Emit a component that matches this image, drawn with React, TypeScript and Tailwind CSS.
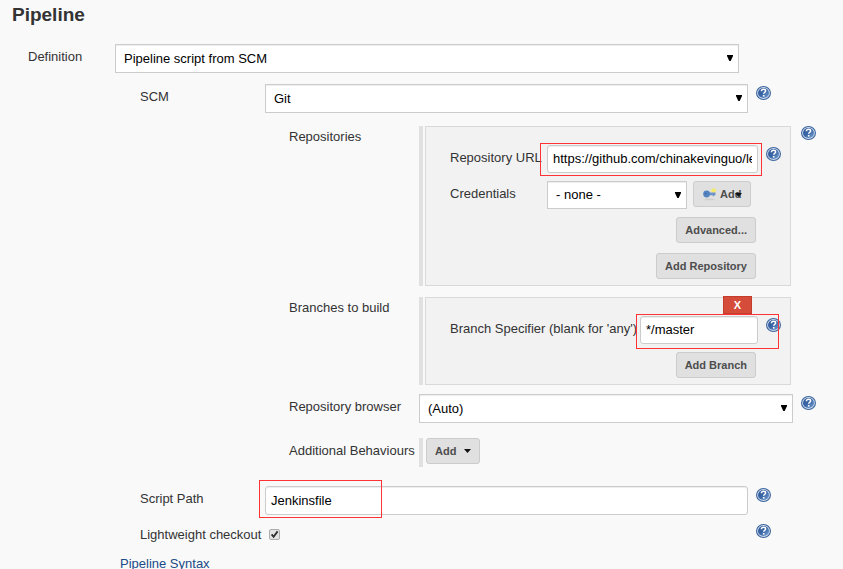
import type { ReactNode, SelectHTMLAttributes } from "react";

const field =
  "w-full border border-[#ccc] bg-white text-[13px] text-black outline-none shadow-[inset_0_1px_1px_rgba(0,0,0,0.075)]";
const button =
  "rounded-[3px] border border-[#ccc] bg-[#e0e0e0] text-[11px] font-bold leading-4 text-[#4d4d4d] px-2 h-[26px] whitespace-nowrap";

function Help({ topic }: { topic: string }) {
  return (
    <a href="#help" aria-label={`Help for feature: ${topic}`} className="mt-[2px] block h-[14px] w-[15px] shrink-0">
      <svg viewBox="0 0 15 14" className="block h-[14px] w-[15px]">
        <defs>
          <linearGradient id="disc" x1="0" y1="0" x2="1" y2="1">
            <stop offset="0" stopColor="#2a5392" />
            <stop offset="0.5" stopColor="#3c68a8" />
            <stop offset="1" stopColor="#7ba3d4" />
          </linearGradient>
        </defs>
        <ellipse cx="7.5" cy="7" rx="7.5" ry="7" fill="#3a649f" />
        <ellipse cx="7.5" cy="7" rx="6.4" ry="6" fill="#cfdcee" />
        <ellipse cx="7.5" cy="7" rx="5.5" ry="5.1" fill="url(#disc)" />
        <path
          d="M5.4 5.2c0-1.3.9-1.9 2.1-1.9s2.1.6 2.1 1.6c0 1.3-1.9 1.4-1.9 2.9"
          fill="none"
          stroke="#fff"
          strokeWidth="1.5"
        />
        <rect x="6.9" y="9" width="1.6" height="1.6" fill="#fff" />
      </svg>
    </a>
  );
}

function Select({ className = "h-[29px]", ...props }: SelectHTMLAttributes<HTMLSelectElement>) {
  return (
    <div className="relative min-w-0 flex-1">
      <select {...props} className={`${field} block appearance-none pr-5 pl-2 ${className}`} />
      <svg viewBox="0 0 6 6" className="pointer-events-none absolute top-[11px] right-[6px] h-[6px] w-[6px]">
        <path d="M0 0h6v1L3.7 6H2.3L0 1z" fill="#000" />
      </svg>
    </div>
  );
}

function Caret() {
  return (
    <svg viewBox="0 0 7 4" className="h-1 w-[7px] shrink-0">
      <path d="M0 0h7L3.5 4z" fill="#111" />
    </svg>
  );
}

function KeyIcon() {
  return (
    <svg viewBox="0 0 16 16" className="h-4 w-4 shrink-0">
      <ellipse cx="7.5" cy="13.4" rx="5" ry="0.9" fill="#cfcfcf" />
      <circle cx="11.6" cy="4.6" r="2.4" fill="#f3ea6b" />
      <path d="M6 6.6h7.5v2.6h-1.3v1h-1.4v-1H6z" fill="#6c94c9" />
      <circle cx="4.6" cy="8" r="3.4" fill="#5583c0" />
      <circle cx="3.6" cy="7.6" r="0.9" fill="#3f6cad" />
    </svg>
  );
}

function Panel({ children }: { children: ReactNode }) {
  return (
    <div className="mt-[2px] mr-[2px] flex min-w-0 flex-1 gap-[2px]">
      <div className="w-1 bg-[#e0e0e0]" />
      <div className="min-w-0 flex-1 border border-[#d9d9d9] bg-[#f2f2f2] pr-[9px] pb-[6px] pl-6">{children}</div>
    </div>
  );
}

const scmLabel = "w-[125px] shrink-0 pt-1";
const gitLabel = "w-[130px] shrink-0 pt-1 whitespace-nowrap";
const scmRow = "flex items-start pr-[72px] pl-[140px]";
const gitRow = "flex items-start pr-[27px] pl-[289px]";

export default function App() {
  return (
    <main className="min-h-screen w-full overflow-hidden bg-[#f9f9f9] font-['Liberation_Sans',Arial,sans-serif] text-[13px] leading-[18px] text-[#333]">
      <h1 className="pt-[3px] pl-3 text-[19px] leading-6 font-bold">Pipeline</h1>

      <div className="mt-[17px] flex items-start pr-[104px] pl-7">
        <label htmlFor="definition" className="w-[87px] shrink-0 pt-1">Definition</label>
        <Select id="definition">
          <option>Pipeline script from SCM</option>
        </Select>
      </div>

      <div className={`mt-[11px] ${scmRow}`}>
        <label htmlFor="scm" className={scmLabel}>SCM</label>
        <Select id="scm">
          <option>Git</option>
        </Select>
        <div className="ml-2"><Help topic="SCM" /></div>
      </div>

      <section className={`mt-[11px] ${gitRow}`}>
        <h2 className={gitLabel}>Repositories</h2>
        <Panel>
          <div className="flex items-start pt-[18px]">
            <label htmlFor="url" className="w-[97px] shrink-0 pt-1 whitespace-nowrap">Repository URL</label>
            <div className="relative min-w-0 flex-1">
              <input
                id="url"
                className={`${field} block h-7 rounded-[3px] px-[5px] pb-[2px]`}
                defaultValue="https://github.com/chinakevinguo/learngit.git"
              />
              <div className="pointer-events-none absolute -top-[2px] -right-1 -bottom-[3px] -left-[7px] border border-[#f33]" />
            </div>
            <div className="ml-2"><Help topic="Repository URL" /></div>
          </div>
          <div className="mt-2 flex items-start pr-[30px]">
            <label htmlFor="credentials" className="w-[97px] shrink-0 pt-1">Credentials</label>
            <Select id="credentials" className="h-7">
              <option>- none -</option>
            </Select>
            <button type="button" className={`${button} relative ml-[6px] flex w-[58px] items-center gap-[2px]`}>
              <KeyIcon />
              Add
              <span className="absolute top-[11px] right-2 flex"><Caret /></span>
            </button>
          </div>
          <div className="mt-2 flex flex-col items-end gap-[10px] pr-[25px]">
            <button type="button" className={button}>Advanced...</button>
            <button type="button" className={button}>Add Repository</button>
          </div>
        </Panel>
        <div className="ml-2"><Help topic="Repositories" /></div>
      </section>

      <section className={`mt-[9px] ${gitRow}`}>
        <h2 className={gitLabel}>Branches to build</h2>
        <Panel>
          <div className="-mt-[2px] flex justify-end pr-[29px]">
            <button
              type="button"
              aria-label="Delete branch"
              className="h-[18px] w-[29px] border border-[#c43c2c] bg-[#d54c3a] text-[11px] leading-4 font-bold text-white"
            >
              X
            </button>
          </div>
          <div className="mt-[2px] flex items-start">
            <label htmlFor="branch" className="w-[190px] shrink-0 pt-1 whitespace-nowrap">
              Branch Specifier (blank for 'any')
            </label>
            <div className="relative min-w-0 flex-1">
              <input id="branch" className={`${field} block h-7 rounded-[3px] px-[5px] pb-[2px]`} defaultValue="*/master" />
              <div className="pointer-events-none absolute -top-[2px] -right-[21px] -bottom-[5px] -left-1 z-10 border border-[#f33]" />
            </div>
            <div className="ml-2"><Help topic="Branch Specifier" /></div>
          </div>
          <div className="mt-2 flex justify-end pr-[25px]">
            <button type="button" className={button}>Add Branch</button>
          </div>
        </Panel>
        <div className="ml-2 w-[15px]" />
      </section>

      <div className={`mt-[9px] ${gitRow}`}>
        <label htmlFor="browser" className={gitLabel}>Repository browser</label>
        <Select id="browser">
          <option>(Auto)</option>
        </Select>
        <div className="ml-2"><Help topic="Repository browser" /></div>
      </div>

      <div className={`mt-[15px] ${gitRow}`}>
        <span className={gitLabel}>Additional Behaviours</span>
        <div className="flex h-[29px] items-start gap-[3px]">
          <div className="h-full w-1 bg-[#e0e0e0]" />
          <button type="button" className={`${button} flex items-center gap-2`}>
            Add
            <Caret />
          </button>
        </div>
      </div>

      <div className={`mt-[19px] ${scmRow}`}>
        <label htmlFor="script" className={scmLabel}>Script Path</label>
        <div className="relative min-w-0 flex-1">
          <input id="script" className={`${field} block h-[29px] rounded-[3px] px-[5px]`} defaultValue="Jenkinsfile" />
          <div className="pointer-events-none absolute -top-[6px] -bottom-[3px] -left-[6px] w-[123px] border border-[#f33]" />
        </div>
        <div className="ml-2"><Help topic="Script Path" /></div>
      </div>

      <div className={`mt-[7px] ${scmRow}`}>
        <label htmlFor="light" className={`${scmLabel} whitespace-nowrap`}>Lightweight checkout</label>
        <div className="flex flex-1 pt-[7px] pl-1">
          <span className="relative block h-[11px] w-[11px]">
            <input
              id="light"
              type="checkbox"
              defaultChecked
              className="peer block h-[11px] w-[11px] appearance-none rounded-[2px] border border-[#adadad] bg-[#e4e4e4]"
            />
            <svg
              viewBox="0 0 11 11"
              className="pointer-events-none invisible absolute inset-0 h-[11px] w-[11px] peer-checked:visible"
            >
              <path d="M2.6 5.4l2 2.4L8.6 2.4" fill="none" stroke="#333" strokeWidth="1.9" />
            </svg>
          </span>
        </div>
        <div className="ml-2"><Help topic="Lightweight checkout" /></div>
      </div>

      <a href="#pipeline-syntax" className="mt-[11px] ml-[120px] block w-fit text-[#204a87]">
        Pipeline Syntax
      </a>
    </main>
  );
}
